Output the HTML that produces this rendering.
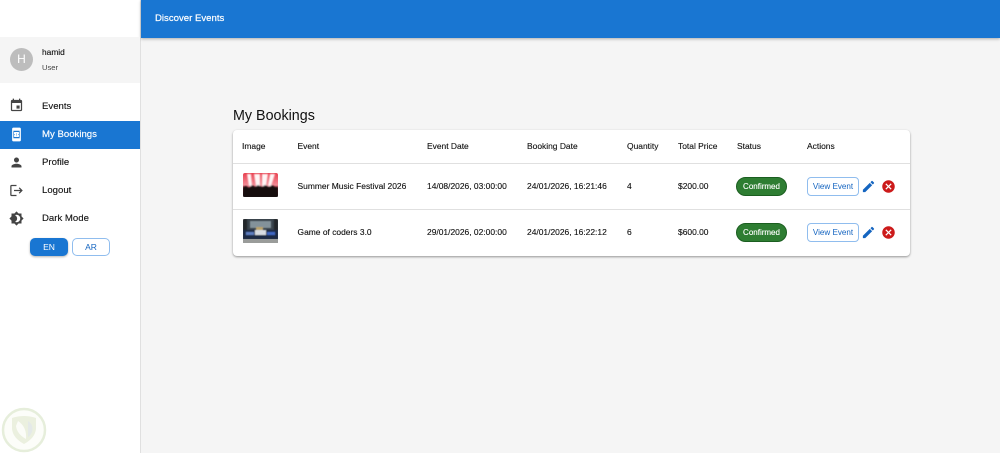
<!DOCTYPE html>
<html><head><meta charset="utf-8"><style>
*{box-sizing:border-box}
html,body{margin:0;padding:0;width:1000px;height:453px;overflow:hidden;background:#f5f5f5;font-family:"Liberation Sans",sans-serif;color:#111}
.a{position:absolute;white-space:nowrap;line-height:12px}
svg{position:absolute;display:block}
.th,.td{font-size:8.45px;-webkit-text-stroke:.12px #111}
.nav{font-size:9.6px;-webkit-text-stroke:.12px #111}
.chip{position:absolute;left:736px;width:51px;height:19px;border-radius:10px;background:#2e7d32;border:1px solid #1b5e20;color:#fff;font-size:8px;line-height:17px;text-align:center;-webkit-text-stroke:.12px #fff}
.btn{position:absolute;left:807px;width:52px;height:19px;border-radius:4px;background:#fff;border:1px solid #90bdee;color:#1565c0;font-size:8.1px;line-height:17px;text-align:center}
</style></head><body>
<div class="a" style="left:0;top:0;width:141px;height:453px;background:#fff;border-right:1px solid #e0e0e0"></div>
<div class="a" style="left:141px;top:0;width:859px;height:38px;background:#1976d2;box-shadow:0 1px 3px rgba(0,0,0,.3)"></div>
<div class="a" style="left:155px;top:13px;color:#fff;font-size:9.6px;-webkit-text-stroke:.2px #fff">Discover Events</div>

<div class="a" style="left:0;top:37px;width:140px;height:46px;background:#f5f5f5"></div>
<div class="a" style="left:10px;top:48px;width:23px;height:23px;border-radius:50%;background:#bdbdbd;color:#fff;font-size:12px;line-height:23px;text-align:center">H</div>
<div class="a" style="left:42px;top:46px;font-size:8.4px;-webkit-text-stroke:.12px #111">hamid</div>
<div class="a" style="left:42px;top:62px;font-size:7.6px;color:#444">User</div>

<div class="a" style="left:0;top:121px;width:140px;height:28px;background:#1976d2"></div>
<svg style="left:9px;top:98px" width="15" height="15" viewBox="0 0 24 24" fill="#444"><path d="M17 12h-5v5h5v-5zM16 1v2H8V1H6v2H5c-1.11 0-1.99.9-1.99 2L3 19c0 1.1.89 2 2 2h14c1.1 0 2-.9 2-2V5c0-1.1-.9-2-2-2h-1V1h-2zm3 18H5V8h14v11z"/></svg>
<svg style="left:9px;top:127px" width="15" height="15" viewBox="0 0 24 24" fill="#fff"><path d="M17 1H7c-1.1 0-2 .9-2 2v18c0 1.1.9 2 2 2h10c1.1 0 2-.9 2-2V3c0-1.1-.9-2-2-2zM7 18V6h10v12H7zm9-7V9.14C16 8.51 15.55 8 15 8H9c-.55 0-1 .51-1 1.14v1.96c.55 0 1 .45 1 1s-.45 1-1 1v1.76C8 15.49 8.45 16 9 16h6c.55 0 1-.51 1-1.14V13c-.55 0-1-.45-1-1s.45-1 1-1zm-3.5 3.5h-1v-1h1v1zm0-2h-1v-1h1v1zm0-2h-1v-1h1v1z"/></svg>
<svg style="left:9px;top:155px" width="15" height="15" viewBox="0 0 24 24" fill="#444"><path d="M12 12c2.21 0 4-1.79 4-4s-1.79-4-4-4-4 1.79-4 4 1.79 4 4 4zm0 2c-2.67 0-8 1.34-8 4v2h16v-2c0-2.66-5.33-4-8-4z"/></svg>
<svg style="left:9px;top:183px" width="15" height="15" viewBox="0 0 24 24" fill="#444"><path d="M17 7l-1.41 1.41L18.17 11H8v2h10.17l-2.58 2.58L17 17l5-5zM4 5h8V3H4c-1.1 0-2 .9-2 2v14c0 1.1.9 2 2 2h8v-2H4V5z"/></svg>
<svg style="left:9px;top:211px" width="15" height="15" viewBox="0 0 24 24" fill="#444"><path d="M20 8.69V4h-4.69L12 .69 8.69 4H4v4.69L.69 12 4 15.31V20h4.69L12 23.31 15.31 20H20v-4.69L23.31 12 20 8.69zM12 18c-.89 0-1.74-.2-2.5-.55C11.56 16.5 13 14.42 13 12s-1.44-4.5-3.5-5.45C10.26 6.2 11.11 6 12 6c3.31 0 6 2.69 6 6s-2.69 6-6 6z"/></svg>
<div class="a nav" style="left:42px;top:101px">Events</div>
<div class="a nav" style="left:42px;top:129px;color:#fff;-webkit-text-stroke:.15px #fff">My Bookings</div>
<div class="a nav" style="left:42px;top:157px">Profile</div>
<div class="a nav" style="left:42px;top:185px">Logout</div>
<div class="a nav" style="left:42px;top:213px">Dark Mode</div>
<div class="a" style="left:30px;top:238px;width:38px;height:18px;border-radius:5px;background:#1976d2;color:#fff;font-size:8.5px;line-height:18px;text-align:center;box-shadow:0 1px 2px rgba(0,0,0,.3)">EN</div>
<div class="a" style="left:72px;top:238px;width:38px;height:18px;border-radius:5px;background:#fff;border:1px solid #90bdee;color:#1565c0;font-size:8.5px;line-height:16px;text-align:center">AR</div>

<svg style="left:1px;top:407px" width="46" height="46" viewBox="0 0 46 46">
<circle cx="23" cy="23" r="21" fill="#fcfdf9" stroke="#e6eedb" stroke-width="2.5"/>
<path d="M11 11Q23 7 35 11V22Q34 31 23 37Q12 31 11 22Z" fill="#ebf0df"/>
<path d="M17 14Q26 20 25 32Q16 27 15 19Z" fill="#fbfcf8"/>
<path d="M27 14Q33 18 31 25Q29 29 27 30Z" fill="#e4e9e8"/>
</svg>

<div class="a" style="left:233px;top:108px;font-size:14.3px;line-height:17px">My Bookings</div>
<div class="a" style="left:233px;top:130px;width:677px;height:126px;background:#fff;border-radius:4px;box-shadow:0 1px 2px rgba(0,0,0,.4)"></div>
<div class="a" style="left:233px;top:163px;width:677px;height:1px;background:#e0e0e0"></div>
<div class="a" style="left:233px;top:209px;width:677px;height:1px;background:#e0e0e0"></div>

<div class="a th" style="left:242px;top:140px">Image</div>
<div class="a th" style="left:297.5px;top:140px">Event</div>
<div class="a th" style="left:427px;top:140px">Event Date</div>
<div class="a th" style="left:527px;top:140px">Booking Date</div>
<div class="a th" style="left:627px;top:140px">Quantity</div>
<div class="a th" style="left:678px;top:140px">Total Price</div>
<div class="a th" style="left:737px;top:140px">Status</div>
<div class="a th" style="left:807px;top:140px">Actions</div>

<svg style="left:243px;top:173px" width="35" height="24" viewBox="0 0 35 24">
<defs>
<linearGradient id="g1" x1="0" y1="0" x2="0" y2="1"><stop offset="0" stop-color="#e8404f"/><stop offset=".5" stop-color="#f28a95"/><stop offset=".65" stop-color="#8a2030"/><stop offset="1" stop-color="#1a0b0e"/></linearGradient>
<filter id="b1"><feGaussianBlur stdDeviation=".9"/></filter>
</defs>
<rect width="35" height="24" rx="2" fill="url(#g1)"/>
<g filter="url(#b1)">
<path d="M4 1L6 13H9L8 1ZM11 1L13 13H17L17 1ZM19 1L19 13H23L25 1ZM27 1L25 13H28L32 1Z" fill="#fff6f6"/>
<path d="M0 14L3 13L6 15L9 12L12 14L15 12L19 14L22 12L26 14L29 12L32 14L35 14V24H0Z" fill="#140a0d"/>
</g>
</svg>
<svg style="left:243px;top:219px" width="35" height="24" viewBox="0 0 35 24">
<defs><filter id="b2"><feGaussianBlur stdDeviation=".6"/></filter></defs>
<rect width="35" height="24" rx="2" fill="#3a444c"/>
<g filter="url(#b2)">
<rect x="7" y="2" width="21" height="7" fill="#83929a"/>
<rect x="0" y="0" width="4" height="11" fill="#20262b"/><rect x="31" y="0" width="4" height="11" fill="#20262b"/>
<rect x="0" y="11" width="35" height="9" fill="#1c2a44"/>
<rect x="3" y="13" width="8" height="3" fill="#5d7dc0"/><rect x="12" y="11" width="11" height="5" fill="#d8dce2"/><rect x="24" y="13" width="8" height="3" fill="#3f68c4"/>
<rect x="13" y="8" width="7" height="3" fill="#b9a36a"/>
</g>
<rect x="0" y="20" width="35" height="4" fill="#9a9c9a"/>
</svg>

<div class="a td" style="left:297.5px;top:180px">Summer Music Festival 2026</div>
<div class="a td" style="left:427px;top:180px">14/08/2026, 03:00:00</div>
<div class="a td" style="left:527px;top:180px">24/01/2026, 16:21:46</div>
<div class="a td" style="left:627px;top:180px">4</div>
<div class="a td" style="left:678px;top:180px">$200.00</div>
<div class="chip" style="top:177px">Confirmed</div>
<div class="btn" style="top:177px">View Event</div>
<svg style="left:861px;top:179px" width="15" height="15" viewBox="0 0 24 24" fill="#1565c0"><path d="M3 17.25V21h3.75L17.81 9.94l-3.75-3.75L3 17.25zM20.71 7.04c.39-.39.39-1.02 0-1.41l-2.34-2.34c-.39-.39-1.02-.39-1.41 0l-1.83 1.83 3.75 3.75 1.83-1.83z"/></svg>
<svg style="left:881px;top:179px" width="15" height="15" viewBox="0 0 24 24" fill="#cc1a1a"><path d="M12 2C6.47 2 2 6.47 2 12s4.47 10 10 10 10-4.47 10-10S17.53 2 12 2zm5 13.59L15.59 17 12 13.41 8.41 17 7 15.59 10.59 12 7 8.41 8.41 7 12 10.59 15.59 7 17 8.41 13.41 12 17 15.59z"/></svg>

<div class="a td" style="left:297.5px;top:226px">Game of coders 3.0</div>
<div class="a td" style="left:427px;top:226px">29/01/2026, 02:00:00</div>
<div class="a td" style="left:527px;top:226px">24/01/2026, 16:22:12</div>
<div class="a td" style="left:627px;top:226px">6</div>
<div class="a td" style="left:678px;top:226px">$600.00</div>
<div class="chip" style="top:223px">Confirmed</div>
<div class="btn" style="top:223px">View Event</div>
<svg style="left:861px;top:225px" width="15" height="15" viewBox="0 0 24 24" fill="#1565c0"><path d="M3 17.25V21h3.75L17.81 9.94l-3.75-3.75L3 17.25zM20.71 7.04c.39-.39.39-1.02 0-1.41l-2.34-2.34c-.39-.39-1.02-.39-1.41 0l-1.83 1.83 3.75 3.75 1.83-1.83z"/></svg>
<svg style="left:881px;top:225px" width="15" height="15" viewBox="0 0 24 24" fill="#cc1a1a"><path d="M12 2C6.47 2 2 6.47 2 12s4.47 10 10 10 10-4.47 10-10S17.53 2 12 2zm5 13.59L15.59 17 12 13.41 8.41 17 7 15.59 10.59 12 7 8.41 8.41 7 12 10.59 15.59 7 17 8.41 13.41 12 17 15.59z"/></svg>
</body></html>
